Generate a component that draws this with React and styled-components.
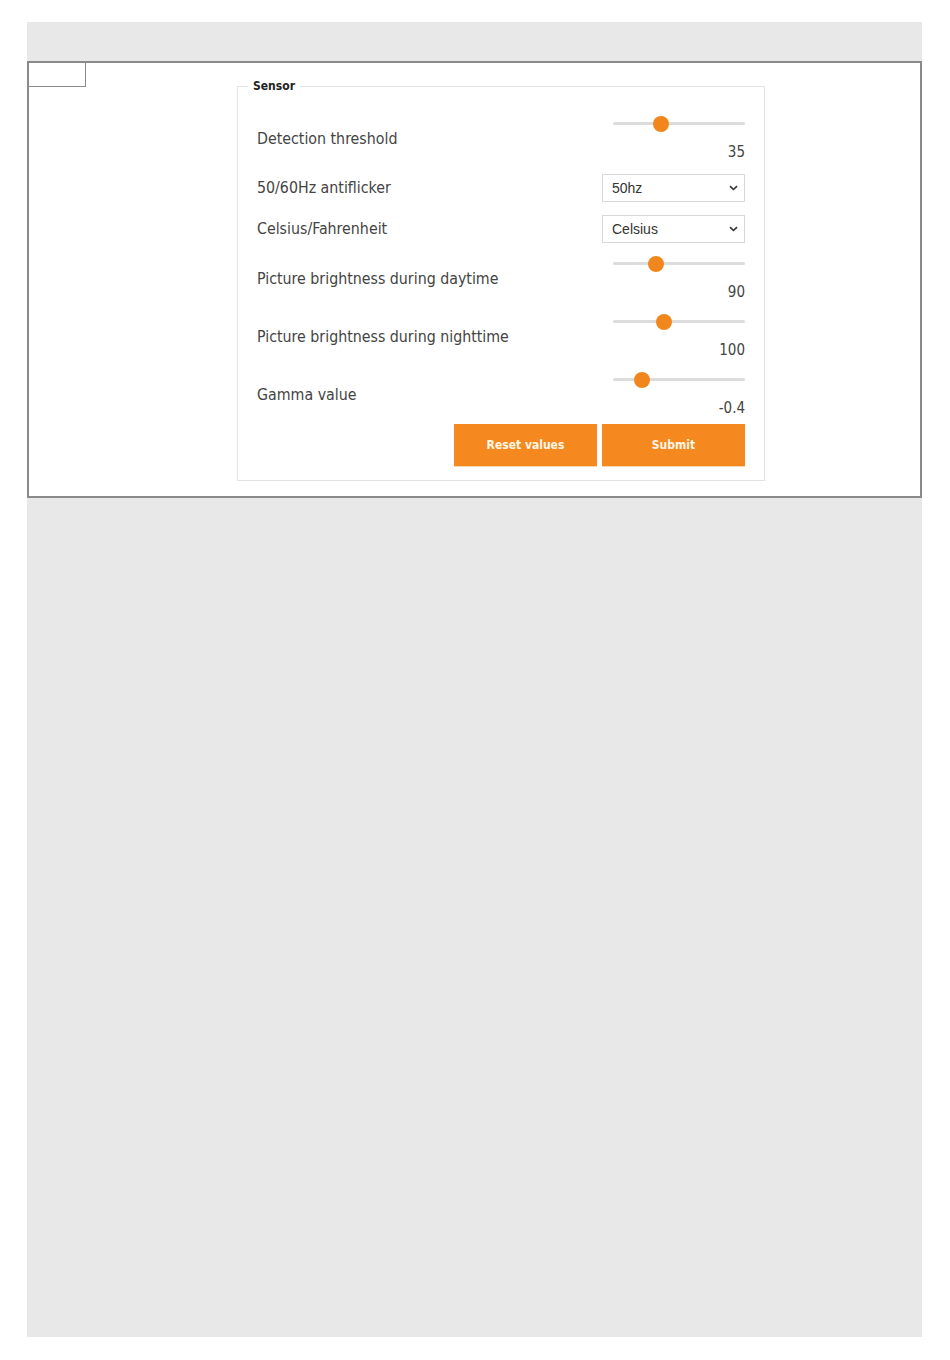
import React from "react"
import styled, { createGlobalStyle } from "styled-components"

const GlobalStyle = createGlobalStyle`
  html, body {
    margin: 0;
    padding: 0;
    background: #ffffff;
  }
  * {
    box-sizing: border-box;
  }
`

const settings = [
  { label: "Detection threshold", type: "slider", value: "35", pos: 0.345 },
  { label: "50/60Hz antiflicker", type: "select", value: "50hz" },
  { label: "Celsius/Fahrenheit", type: "select", value: "Celsius" },
  { label: "Picture brightness during daytime", type: "slider", value: "90", pos: 0.3 },
  { label: "Picture brightness during nighttime", type: "slider", value: "100", pos: 0.37 },
  { label: "Gamma value", type: "slider", value: "-0.4", pos: 0.18 },
]

function App() {
  return (
    <>
      <GlobalStyle />
      <Page>
        <Header />
        <Panel>
          <Tab />
          <Fieldset>
            <Legend>Sensor</Legend>
            {settings.map((s) => (
              <Row key={s.label}>
                <Label>{s.label}</Label>
                {s.type === "slider" ? (
                  <SliderBox>
                    <Track>
                      <Thumb style={{ left: `calc(${s.pos * 100}% - ${s.pos * 16}px)` }} />
                    </Track>
                    <Value>{s.value}</Value>
                  </SliderBox>
                ) : (
                  <Select>
                    <span>{s.value}</span>
                    <svg width="9" height="6" viewBox="0 0 9 6">
                      <path d="M1 1.2 L4.5 4.5 L8 1.2" fill="none" stroke="#333" strokeWidth="1.6" />
                    </svg>
                  </Select>
                )}
              </Row>
            ))}
            <Buttons>
              <Button>Reset values</Button>
              <Button>Submit</Button>
            </Buttons>
          </Fieldset>
        </Panel>
      </Page>
    </>
  )
}

export default App

const Page = styled.div`
  margin: 22px 28px 23px 27px;
  width: 895px;
  height: 1315px;
  background: #e8e8e8;
  display: flex;
  flex-direction: column;
`

const Header = styled.div`
  height: 39px;
`

const Panel = styled.div`
  height: 437px;
  background: #ffffff;
  border: 2px solid #8a8a8a;
  position: relative;
  padding-top: 16px;
`

const Tab = styled.div`
  position: absolute;
  left: 0;
  top: 0;
  width: 57px;
  height: 24px;
  border-right: 1px solid #8a8a8a;
  border-bottom: 1px solid #8a8a8a;
`

const Fieldset = styled.fieldset`
  margin: 0 0 0 208px;
  width: 528px;
  border: 1px solid #e3e3e3;
  padding: 23px 19px 14px 19px;
  display: flex;
  flex-direction: column;
  gap: 13px;
  font-family: "DejaVu Sans Condensed", "Liberation Sans Narrow", sans-serif;
`

const Legend = styled.legend`
  padding: 0 5px;
  margin-left: -9px;
  font-size: 12px;
  font-weight: bold;
  color: #222;
  line-height: 14px;
`

const Row = styled.div`
  display: flex;
  align-items: center;
  justify-content: space-between;
`

const Label = styled.div`
  font-size: 15.8px;
  color: #444;
  line-height: 18px;
`

const SliderBox = styled.div`
  width: 132px;
  display: flex;
  flex-direction: column;
`

const Track = styled.div`
  position: relative;
  height: 16px;
  &::before {
    content: "";
    position: absolute;
    left: 0;
    right: 0;
    top: 6px;
    height: 3px;
    border-radius: 2px;
    background: #dcdcdc;
  }
`

const Thumb = styled.div`
  position: absolute;
  top: 0;
  width: 16px;
  height: 16px;
  border-radius: 50%;
  background: #f0861c;
`

const Value = styled.div`
  margin-top: 11px;
  text-align: right;
  font-size: 15px;
  line-height: 18px;
  color: #444;
`

const Select = styled.div`
  width: 143px;
  height: 28px;
  border: 1px solid #d8d8d8;
  display: flex;
  align-items: center;
  justify-content: space-between;
  padding: 0 6px 0 9px;
  font-family: "Liberation Sans", Arial, sans-serif;
  font-size: 14px;
  color: #333;
`

const Buttons = styled.div`
  display: flex;
  justify-content: flex-end;
  gap: 5px;
  margin-top: -6px;
`

const Button = styled.button`
  width: 143px;
  height: 42px;
  border: none;
  background: #f5891f;
  color: #fff6e4;
  font-family: "DejaVu Sans Condensed", "Liberation Sans Narrow", sans-serif;
  font-weight: bold;
  font-size: 12px;
  box-shadow: 0 1px 0 #f8d8b0;
`
